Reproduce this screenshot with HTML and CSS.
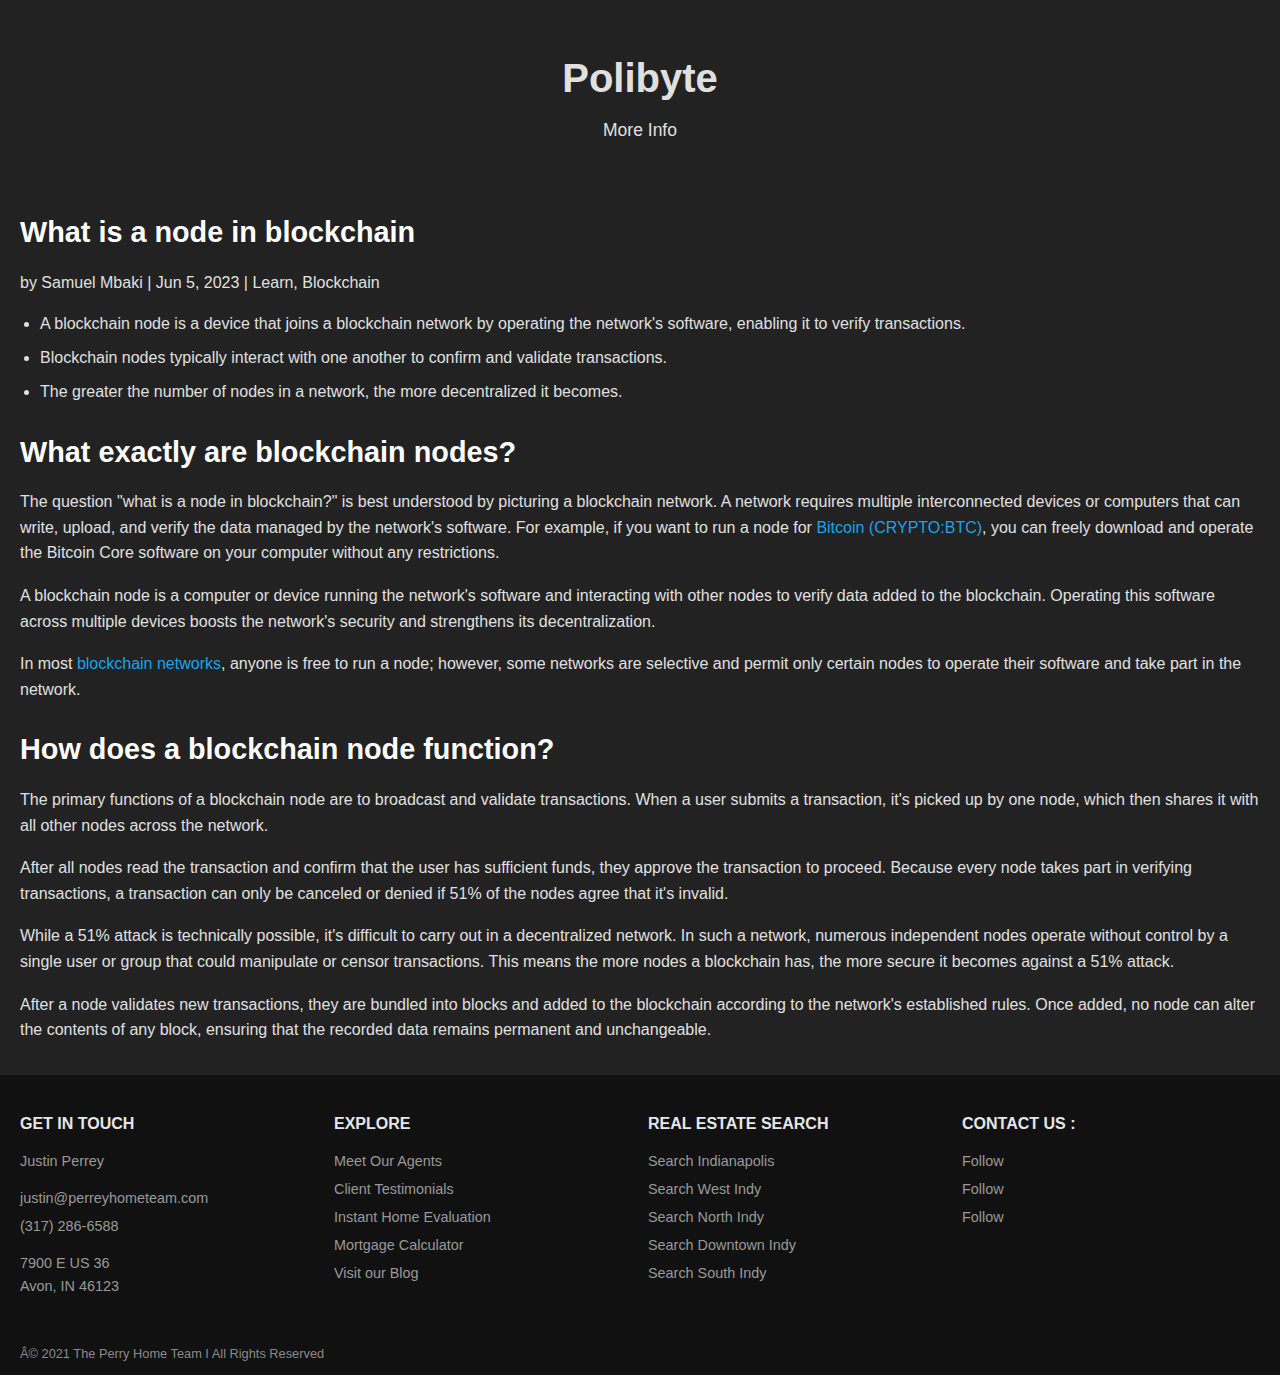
FILE: index.html
```html
<!DOCTYPE html>
<html lang="en">
<head>
<meta charset="utf-8">
<title>Polibyte - What is a node in blockchain</title>
<link rel="stylesheet" href="styles.css">
</head>
<body>
<header class="site-header">
  <h1 class="brand">Polibyte</h1>
  <nav class="site-nav"><a href="#" class="nav-link">More Info</a></nav>
</header>

<main class="article">
  <h1 class="article-title">What is a node in blockchain</h1>
  <p class="meta">by Samuel Mbaki | Jun 5, 2023 | Learn, Blockchain</p>
  <ul class="takeaways">
    <li>A blockchain node is a device that joins a blockchain network by operating the network's software, enabling it to verify transactions.</li>
    <li>Blockchain nodes typically interact with one another to confirm and validate transactions.</li>
    <li>The greater the number of nodes in a network, the more decentralized it becomes.</li>
  </ul>

  <h2 class="section-title">What exactly are blockchain nodes?</h2>
  <p>The question "what is a node in blockchain?" is best understood by picturing a blockchain network. A network requires multiple interconnected devices or computers that can write, upload, and verify the data managed by the network's software. For example, if you want to run a node for <a href="#" class="link">Bitcoin (CRYPTO:BTC)</a>, you can freely download and operate the Bitcoin Core software on your computer without any restrictions.</p>
  <p>A blockchain node is a computer or device running the network's software and interacting with other nodes to verify data added to the blockchain. Operating this software across multiple devices boosts the network's security and strengthens its decentralization.</p>
  <p>In most <a href="#" class="link">blockchain networks</a>, anyone is free to run a node; however, some networks are selective and permit only certain nodes to operate their software and take part in the network.</p>

  <h2 class="section-title">How does a blockchain node function?</h2>
  <p>The primary functions of a blockchain node are to broadcast and validate transactions. When a user submits a transaction, it's picked up by one node, which then shares it with all other nodes across the network.</p>
  <p>After all nodes read the transaction and confirm that the user has sufficient funds, they approve the transaction to proceed. Because every node takes part in verifying transactions, a transaction can only be canceled or denied if 51% of the nodes agree that it's invalid.</p>
  <p>While a 51% attack is technically possible, it's difficult to carry out in a decentralized network. In such a network, numerous independent nodes operate without control by a single user or group that could manipulate or censor transactions. This means the more nodes a blockchain has, the more secure it becomes against a 51% attack.</p>
  <p>After a node validates new transactions, they are bundled into blocks and added to the blockchain according to the network's established rules. Once added, no node can alter the contents of any block, ensuring that the recorded data remains permanent and unchangeable.</p>
</main>

<footer class="site-footer">
  <div class="footer-grid">
    <div class="footer-col">
      <h4 class="footer-heading">Get in Touch</h4>
      <p class="footer-name">Justin Perrey</p>
      <p class="footer-contact">
        <a href="#" class="footer-link block">justin@perreyhometeam.com</a>
        <a href="#" class="footer-link block">(317) 286-6588</a>
      </p>
      <p class="footer-address">7900 E US 36<br>Avon, IN 46123</p>
    </div>
    <div class="footer-col">
      <h4 class="footer-heading">Explore</h4>
      <ul class="footer-list">
        <li><a href="#" class="footer-link">Meet Our Agents</a></li>
        <li><a href="#" class="footer-link">Client Testimonials</a></li>
        <li><a href="#" class="footer-link">Instant Home Evaluation</a></li>
        <li><a href="#" class="footer-link">Mortgage Calculator</a></li>
        <li><a href="#" class="footer-link">Visit our Blog</a></li>
      </ul>
    </div>
    <div class="footer-col">
      <h4 class="footer-heading">Real Estate Search</h4>
      <ul class="footer-list">
        <li><a href="#" class="footer-link">Search Indianapolis</a></li>
        <li><a href="#" class="footer-link">Search West Indy</a></li>
        <li><a href="#" class="footer-link">Search North Indy</a></li>
        <li><a href="#" class="footer-link">Search Downtown Indy</a></li>
        <li><a href="#" class="footer-link">Search South Indy</a></li>
      </ul>
    </div>
    <div class="footer-col">
      <h4 class="footer-heading">Contact Us :</h4>
      <ul class="footer-list">
        <li><a href="#" class="footer-link">Follow</a></li>
        <li><a href="#" class="footer-link">Follow</a></li>
        <li><a href="#" class="footer-link">Follow</a></li>
      </ul>
    </div>
  </div>
  <p class="copyright">Â© 2021 The Perry Home Team I All Rights Reserved</p>
</footer>
</body>
</html>
```

FILE: styles.css
```css
* {
  box-sizing: border-box;
}

html, body {
  margin: 0;
  padding: 0;
}

body {
  background: #222222;
  color: #e0e0e0;
  font-family: "Liberation Sans", Arial, Helvetica, sans-serif;
  font-size: 16px;
  line-height: 1.6;
}

a {
  text-decoration: none;
}

/* Header */
.site-header {
  text-align: center;
  padding: 54px 20px 40px;
}

.brand {
  margin: 0;
  font-size: 40px;
  line-height: 48px;
  font-weight: 700;
  color: #e0e0e0;
}

.site-nav {
  margin-top: 15px;
  line-height: 26px;
}

.nav-link {
  color: #e0e0e0;
  font-size: 17.5px;
}

/* Article */
.article {
  padding: 31px 20px 15px;
}

.article-title,
.section-title {
  color: #ffffff;
  font-size: 28.8px;
  line-height: 1.2;
  font-weight: 700;
}

.article-title {
  margin: 0 0 20px;
}

.section-title {
  margin: 30px 0 20px;
}

.article p {
  margin: 0 0 17px;
}

.article p.meta {
  margin-bottom: 16px;
  color: #e0e0e0;
}

.takeaways {
  margin: 0 0 16px;
  padding-left: 20px;
}

.takeaways li {
  margin-bottom: 8.4px;
}

.link {
  color: #1ba3ec;
}

/* Footer */
.site-footer {
  background: #111111;
  padding: 39px 20px 12px;
}

.footer-grid {
  display: grid;
  grid-template-columns: repeat(4, 1fr);
  column-gap: 16px;
}

.footer-heading {
  margin: 0 0 14px;
  font-size: 16px;
  line-height: 19px;
  font-weight: 700;
  text-transform: uppercase;
  color: #e6e6e6;
}

.footer-col p {
  margin: 0;
  font-size: 14.4px;
  color: #999999;
}

.footer-name {
  line-height: 28px;
}

.footer-contact {
  margin-top: 9px !important;
}

.footer-address {
  margin-top: 12px !important;
  line-height: 23px;
}

.footer-link {
  color: #999999;
  font-size: 14.4px;
  line-height: 28px;
}

.footer-link.block {
  display: block;
}

.footer-list {
  list-style: none;
  margin: 0;
  padding: 0;
}

.footer-list li {
  line-height: 28px;
}

.copyright {
  margin: 46px 0 0;
  font-size: 12.8px;
  line-height: 20px;
  color: #8a8a8a;
}
```
